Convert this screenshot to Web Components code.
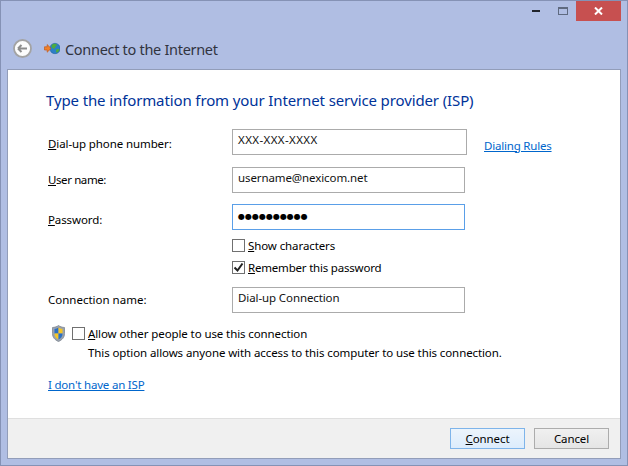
<!DOCTYPE html>
<html>
<head>
<meta charset="utf-8">
<title>Connect to the Internet</title>
<style>
    html, body { margin: 0; padding: 0; height: 100%; }
    body { font-family: "Noto Sans", "Open Sans", sans-serif; font-size: 11.5px; letter-spacing: -0.1px; color: #000; }
    .heading { margin: 19px 0 18px -2px; }
    .gap-12 { margin-top: 12px; }
    .gap-11 { margin-top: 11px; }
    .check-1 { margin: 9px 0 0 184px; }
    .check-2 { margin: 9px 0 0 184px; letter-spacing: -0.2px; }
    .conn { margin-top: 13px; }
    .allow { margin-top: 14px; }
    .no-isp { margin-top: 17px; letter-spacing: -0.2px; }
    .up-1 { padding-bottom: 2px; }
    .down-1 { padding-top: 2px; }
    .down-2 { padding-top: 4px; }
</style>
</head>
<body>
<wizard-window title-text="Connect to the Internet">
    <wizard-heading class="heading">Type the information from your Internet service provider (ISP)</wizard-heading>
    <form-row class="first"><span slot="label" class="down-1"><u>D</u>ial-up phone number:</span>
        <text-box value="XXX-XXX-XXXX" style="width:235px;letter-spacing:.4px"></text-box>
        <wiz-link slot="extra" style="letter-spacing:-.2px">Dialing Rules</wiz-link>
    </form-row>
    <form-row class="gap-12"><span slot="label" class="up-1" style="letter-spacing:-.4px"><u>U</u>ser name:</span>
        <text-box value="username@nexicom.net"></text-box>
    </form-row>
    <form-row class="gap-11"><span slot="label" class="down-2"><u>P</u>assword:</span>
        <text-box value="●●●●●●●●●●" focused password></text-box>
    </form-row>
    <check-box class="check-1"><u>S</u>how characters</check-box>
    <check-box class="check-2" checked><u>R</u>emember this password</check-box>
    <form-row class="conn"><span slot="label" class="up-1" style="letter-spacing:0"  >Connection name:</span>
        <text-box value="Dial-up Connection"></text-box>
    </form-row>
    <allow-option class="allow"></allow-option>
    <wiz-link class="no-isp">I don't have an ISP</wiz-link>
    <wiz-button slot="footer" default><u>C</u>onnect</wiz-button>
    <wiz-button slot="footer">Cancel</wiz-button>
</wizard-window>

<script>
class WizardWindow extends HTMLElement {
    constructor() {
        super();
        const shadow = this.attachShadow({ mode: 'open' })
        shadow.innerHTML = `
            <style>
                :host {
                    display: flex;
                    flex-direction: column;
                    box-sizing: border-box;
                    width: 628px;
                    height: 466px;
                    background: #b0bee3;
                    border: 1px solid #8592b5;
                }
                .caption {
                    height: 20px;
                    display: flex;
                    justify-content: flex-end;
                    padding-right: 6px;
                }
                .btn { display: flex; align-items: center; justify-content: center; }
                .min { width: 26px; }
                .max { width: 27px; }
                .close { width: 45px; background: #c75050; }
                .nav {
                    height: 48px;
                    box-sizing: border-box;
                    display: flex;
                    align-items: center;
                    padding: 8px 0 0 11px;
                }
                .globe { margin-left: 12px; }
                .title {
                    margin-left: 5px;
                    font-size: 14.5px;
                    letter-spacing: -0.3px;
                    color: #30343f;
                }
                .frame {
                    flex: 1;
                    display: flex;
                    flex-direction: column;
                    margin: 0 6px 6px;
                    border: 1px solid #929db9;
                    background: #fff;
                    min-height: 0;
                }
                .main {
                    flex: 1;
                    display: flex;
                    flex-direction: column;
                    align-items: flex-start;
                    padding-left: 40px;
                }
                .footer {
                    height: 40px;
                    box-sizing: border-box;
                    border-top: 1px solid #dfdfdf;
                    background: #f0f0f0;
                    display: flex;
                    justify-content: flex-end;
                    gap: 9px;
                    padding: 9px 11px 0 0;
                }
            </style>
            <div class="caption">
                <div class="btn min"><svg width="8" height="2"><rect width="8" height="2" fill="#20242c"/></svg></div>
                <div class="btn max"><svg width="10" height="8"><rect x=".5" y=".5" width="9" height="7" fill="none" stroke="#5f6a80"/><rect width="10" height="2" fill="#5f6a80"/></svg></div>
                <div class="btn close"><svg width="9" height="8" viewBox="0 0 9 8"><path d="M1 .5 8 7.5M8 .5 1 7.5" stroke="#fff" stroke-width="2" fill="none"/></svg></div>
            </div>
            <div class="nav">
                <svg width="20" height="20" viewBox="0 0 20 20">
                    <circle cx="10.5" cy="9.5" r="8.5" fill="#fcfcfc" stroke="#a3a3a3" stroke-width="1.8"/>
                    <path d="M6 9.500h9M6 9.500l3.500-3.500M6 9.500l3.500 3.500" fill="none" stroke="#8c8c8c" stroke-width="2"/>
                </svg>
                <svg class="globe" width="16" height="14" viewBox="0 0 16 14">
                    <circle cx="11" cy="6.500" r="5.200" fill="#2c7fc6" stroke="#1f5f9a" stroke-width=".5"/>
                    <path d="M8 2.800c1.500-1.300 3.500-1.300 5-.3 0 1.300-1.500 1.500-1.800 3-.3 1.300-1.700 1.200-2.700.7-1-.6-1.300-2.300-.5-3.400zM12.500 7.300c1-.5 2.300-.5 3 0-.3 1.700-1.500 3-2.800 3.500-.8-1-1-2.600-.2-3.500z" fill="#4dab3f"/>
                    <path d="M.5 4.800h2.700V2.600L7 6.400l-3.800 3.800V8H.5z" fill="#f0812a" stroke="#c25a1c" stroke-width=".7"/>
                </svg>
                <span class="title">${this.getAttribute('title-text')}</span>
            </div>
            <div class="frame">
                <div class="main"><slot></slot></div>
                <div class="footer"><slot name="footer"></slot></div>
            </div>
        `
    }
}
customElements.define('wizard-window', WizardWindow)

class WizardHeading extends HTMLElement {
    constructor() {
        super();
        const shadow = this.attachShadow({ mode: 'open' })
        shadow.innerHTML = `
            <style>
                :host { display: block; font-size: 15px; letter-spacing: -0.12px; line-height: 22px; color: #003399; white-space: nowrap; }
            </style>
            <slot></slot>
        `
    }
}
customElements.define('wizard-heading', WizardHeading)

class FormRow extends HTMLElement {
    constructor() {
        super();
        const shadow = this.attachShadow({ mode: 'open' })
        shadow.innerHTML = `
            <style>
                :host { display: grid; grid-template-columns: 184px auto auto; align-items: center; justify-content: start; }
                ::slotted([slot=extra]) { margin: 6px 0 0 17px; }
            </style>
            <slot name="label"></slot>
            <slot></slot>
            <slot name="extra"></slot>
        `
    }
}
customElements.define('form-row', FormRow)

class TextBox extends HTMLElement {
    constructor() {
        super();
        const shadow = this.attachShadow({ mode: 'open' })
        const pw = this.hasAttribute('password')
        shadow.innerHTML = `
            <style>
                :host {
                    display: flex;
                    align-items: center;
                    box-sizing: border-box;
                    width: 233px;
                    height: 26px;
                    padding: 0 5px 5px;
                    background: #fff;
                    border: 1px solid #ababab;
                    white-space: nowrap;
                    color: #111;
                }
                :host([focused]) { border-color: #5a9fe8; }
                .dots { font-family: "DejaVu Sans", sans-serif; font-size: 8px; letter-spacing: 0; color: #000; padding-top: 3px; }
            </style>
            <span class="${pw ? 'dots' : ''}">${this.getAttribute('value')}</span>
        `
    }
}
customElements.define('text-box', TextBox)

class CheckBox extends HTMLElement {
    constructor() {
        super();
        const shadow = this.attachShadow({ mode: 'open' })
        const mark = this.hasAttribute('checked')
            ? '<svg width="11" height="11" viewBox="0 0 11 11"><path d="M1.5 5.500 4.500 8.500 9.500 1.500" fill="none" stroke="#222" stroke-width="2"/></svg>'
            : ''
        shadow.innerHTML = `
            <style>
                :host { display: flex; align-items: center; gap: 3px; height: 13px; white-space: nowrap; }
                .box {
                    box-sizing: border-box;
                    width: 13px;
                    height: 13px;
                    border: 1px solid #707070;
                    background: #fff;
                    display: flex;
                    align-items: center;
                    justify-content: center;
                }
            </style>
            <div class="box">${mark}</div>
            <span><slot></slot></span>
        `
    }
}
customElements.define('check-box', CheckBox)

class AllowOption extends HTMLElement {
    constructor() {
        super();
        const shadow = this.attachShadow({ mode: 'open' })
        shadow.innerHTML = `
            <style>
                :host { display: grid; grid-template-columns: 16px auto; column-gap: 5px; margin-left: 3px; }
                .shield { margin: -2px 0 0 1px; }
                .text { display: flex; flex-direction: column; gap: 5px; }
                .line { height: 15px; line-height: 15px; white-space: nowrap; }
            </style>
            <svg class="shield" width="13" height="17" viewBox="0 0 13 17">
                <path d="M6.500.5C5 1.700 3 2.300.5 2.500v6C.5 12.500 3 15 6.500 16.500c3.500-1.500 6-4 6-8v-6C10 2.300 8 1.700 6.500.5z" fill="#9aa3ae" stroke="#7d8590" stroke-width=".8"/>
                <path d="M6.500 2.500C5.300 3.300 4 3.700 2.500 3.900V8.500h4z" fill="#2a6fc4"/>
                <path d="M6.500 2.500c1.200.8 2.500 1.200 4 1.400V8.500h-4z" fill="#f6c624"/>
                <path d="M2.500 8.500h4v6C4 13.500 2.500 11.500 2.500 8.500z" fill="#f6c624"/>
                <path d="M10.500 8.500h-4v6c2.500-1 4-3 4-6z" fill="#2a6fc4"/>
            </svg>
            <div class="text">
                <check-box><u>A</u>llow other people to use this connection</check-box>
                <div class="line" style="margin-left:16px">This option allows anyone with access to this computer to use this connection.</div>
            </div>
        `
    }
}
customElements.define('allow-option', AllowOption)

class WizLink extends HTMLElement {
    constructor() {
        super();
        const shadow = this.attachShadow({ mode: 'open' })
        shadow.innerHTML = `
            <style>
                :host { display: inline-block; color: #0066cc; text-decoration: underline; white-space: nowrap; cursor: pointer; }
            </style>
            <slot></slot>
        `
    }
}
customElements.define('wiz-link', WizLink)

class WizButton extends HTMLElement {
    constructor() {
        super();
        const shadow = this.attachShadow({ mode: 'open' })
        shadow.innerHTML = `
            <style>
                :host {
                    display: flex;
                    align-items: center;
                    justify-content: center;
                    box-sizing: border-box;
                    width: 75px;
                    height: 21px;
                    padding-bottom: 1px;
                    border: 1px solid #acacac;
                    background: linear-gradient(#f0f0f0, #e5e5e5);
                    cursor: pointer;
                }
                :host([default]) {
                    border-color: #7eb4ea;
                    background: linear-gradient(#ecf4fc, #dcecfc);
                }
            </style>
            <slot></slot>
        `
    }
}
customElements.define('wiz-button', WizButton)
</script>
</body>
</html>
